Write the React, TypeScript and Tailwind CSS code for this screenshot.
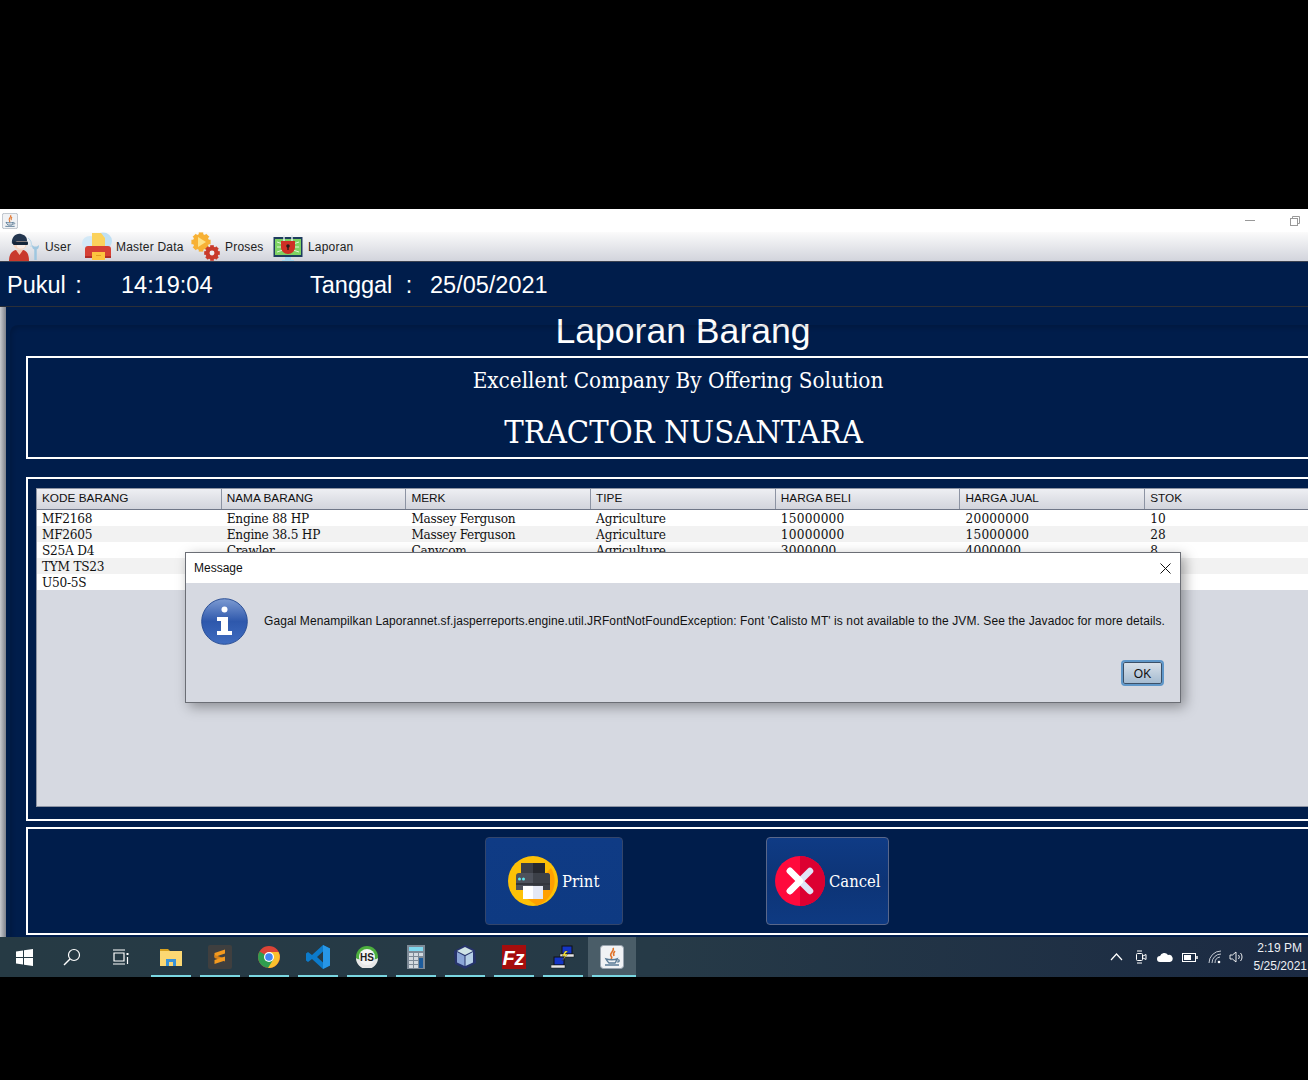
import React from "react";

const sans = "font-['Liberation_Sans',Arial,sans-serif]";
const serif = "font-['DejaVu_Serif_Condensed','DejaVu_Serif',serif]";

const headers = ["KODE BARANG", "NAMA BARANG", "MERK", "TIPE", "HARGA BELI", "HARGA JUAL", "STOK"];
const colTracking = [
  "tracking-[-0.25px]",
  "tracking-[-0.25px]",
  "tracking-[-0.25px]",
  "tracking-[-0.05px]",
  "tracking-[0.25px]",
  "tracking-[0.25px]",
  "tracking-[0.25px]",
];
const rows = [
  ["MF2168", "Engine 88 HP", "Massey Ferguson", "Agriculture", "15000000", "20000000", "10"],
  ["MF2605", "Engine 38.5 HP", "Massey Ferguson", "Agriculture", "10000000", "15000000", "28"],
  ["S25A D4", "Crawler", "Canycom", "Agriculture", "3000000", "4000000", "8"],
  ["TYM TS23", "", "", "", "", "", ""],
  ["U50-5S", "", "", "", "", "", ""],
];

function UserIcon() {
  return (
    <svg width="32" height="28" viewBox="0 0 32 28">
      <path d="M27.500 27v-11" stroke="#9fc7e0" strokeWidth="2.500" fill="none" />
      <path d="M24 12c0 3 1 4.500 3.500 4.500S31 15 31 12l-2 1.500h-3z" fill="#9fc7e0" />
      <path d="M20 5c3 2 4 5 3 9" stroke="#b7d7ea" strokeWidth="1" fill="none" />
      <path d="M1 28c0-8 4-11 8-11h5c4 0 7 3 7 11z" fill="#c9392c" />
      <path d="M8 17h7l-3.500 5z" fill="#f3c8b4" />
      <circle cx="12" cy="10" r="7" fill="#f6d6c3" />
      <path d="M4 11C3 4 8 0 13 1c4 1 6 3 6 7H9z" fill="#23364f" />
      <rect x="5" y="8.500" width="15" height="3.500" rx="1" fill="#16263a" />
      <path d="M9 12h8v2c-2 2-6 2-8 0z" fill="#fbeee7" />
    </svg>
  );
}
function MasterIcon() {
  return (
    <svg width="30" height="30" viewBox="0 0 30 30">
      <ellipse cx="8" cy="11" rx="8" ry="7" fill="#d3e9f7" />
      <ellipse cx="21" cy="9" rx="9" ry="8.500" fill="#bfe0f4" />
      <path d="M10 1h9l4 5v9H10z" fill="#fbd25c" />
      <path d="M6 14h20a3 3 0 0 1 3 3v9H3v-9a3 3 0 0 1 3-3z" fill="#d64035" />
      <rect x="3" y="24" width="26" height="2" fill="#b12d28" />
      <rect x="10" y="20" width="13" height="8" fill="#fcc43f" />
      <rect x="14" y="23" width="5" height="1" fill="#e49c24" />
    </svg>
  );
}
function gear(cx: number, cy: number, r: number, color: string, hole: string) {
  const teeth = [0, 45, 90, 135].map((a) => (
    <rect key={a} x={cx - r * 0.28} y={cy - r * 1.2} width={r * 0.56} height={r * 2.4} fill={color} transform={`rotate(${a} ${cx} ${cy})`} />
  ));
  return (
    <g>
      {teeth}
      <circle cx={cx} cy={cy} r={r} fill={color} />
      <circle cx={cx} cy={cy} r={r * 0.38} fill={hole} />
    </g>
  );
}
function ProsesIcon() {
  return (
    <svg width="32" height="30" viewBox="0 0 32 30">
      {gear(11, 10, 8, "#f7b135", "#f7b135")}
      <path d="M8 5l8 5-8 5z" fill="#fde38a" />
      {gear(22, 21, 6.500, "#c93b2b", "#eef0f3")}
    </svg>
  );
}
function LaporanIcon() {
  return (
    <svg width="31" height="30" viewBox="0 0 31 30">
      <rect x="0.500" y="5" width="29" height="20" fill="#1f3d5e" />
      <rect x="2" y="7" width="26" height="16" fill="#7ed363" />
      <path d="M4 10l6 2M4 15h6M4 20l6-2M26 10l-6 2M26 15h-6M26 20l-6-2" stroke="#dff6d6" strokeWidth="1" />
      <rect x="12" y="25" width="6" height="3" fill="#a6d8f0" />
      <rect x="9" y="28" width="12" height="1" fill="#a6d8f0" />
      <path d="M11 3v6M19 3v6" stroke="#dfe6ea" strokeWidth="1.500" fill="none" />
      <path d="M8 9h14v6c0 4-3 7-7 7s-7-3-7-7z" fill="#cf3025" />
      <circle cx="15" cy="14" r="1.800" fill="#2a1a1a" />
      <rect x="14.300" y="14" width="1.400" height="4" fill="#2a1a1a" />
    </svg>
  );
}
function JavaIcon({ size = 16 }: { size?: number }) {
  return (
    <svg width={size} height={size} viewBox="0 0 24 24">
      <rect x="0.500" y="0.500" width="23" height="23" rx="3" fill="#f0f2f5" stroke="#9aa5b1" />
      <path d="M13 3c2 3-4 5-2 8 1 1 1 2 0 3M15 6c-2 2-2 3-1 5" stroke="#e0732a" strokeWidth="1.600" fill="none" />
      <path d="M6 14c3 1 9 1 11 0-1 2-1 3-2 4H9c-1-1-2-2-3-4zM5 20h14" stroke="#5a7b96" strokeWidth="1.400" fill="none" />
      <path d="M17 15c3-1 3 2 0 2" stroke="#5a7b96" strokeWidth="1.200" fill="none" />
    </svg>
  );
}
function PrintIcon() {
  return (
    <svg width="50" height="50" viewBox="0 0 50 50">
      <circle cx="25" cy="25" r="25" fill="#fdc107" />
      <path d="M15 40L43 12a25 25 0 0 1 0 26 25 25 0 0 1-14 11.500z" fill="#ffa000" />
      <rect x="13" y="7" width="24" height="14" fill="#3c3f47" />
      <rect x="25" y="7" width="12" height="14" fill="#27292f" />
      <path d="M11 17h28a3 3 0 0 1 3 3v14H8V20a3 3 0 0 1 3-3z" fill="#4e525c" />
      <path d="M25 17h14a3 3 0 0 1 3 3v14H25z" fill="#3c4048" />
      <rect x="8" y="27" width="34" height="2" fill="#33363d" />
      <circle cx="11.500" cy="23" r="1.500" fill="#5fe6ee" />
      <circle cx="15.500" cy="23" r="1.500" fill="#5fe6ee" />
      <rect x="15" y="30" width="10" height="13" fill="#ffffff" />
      <rect x="25" y="30" width="10" height="13" fill="#e4e8f5" />
    </svg>
  );
}
function CancelIcon() {
  return (
    <svg width="50" height="50" viewBox="0 0 50 50">
      <circle cx="25" cy="25" r="25" fill="#ff0a3c" />
      <path d="M25 0a25 25 0 0 1 0 50z" fill="#dc0031" />
      <path d="M15 15l20 20M35 15L15 35" stroke="#dfe3f6" strokeWidth="6.500" strokeLinecap="round" />
      <path d="M15 15l10 10M15 35l10-10" stroke="#ffffff" strokeWidth="6.500" strokeLinecap="round" />
    </svg>
  );
}
function InfoIcon() {
  return (
    <svg width="47" height="47" viewBox="0 0 47 47">
      <defs>
        <linearGradient id="ig" x1="0" y1="0" x2="0" y2="1">
          <stop offset="0" stopColor="#7d9bd2" />
          <stop offset="0.5" stopColor="#2e58ac" />
          <stop offset="1" stopColor="#3f6cc0" />
        </linearGradient>
      </defs>
      <circle cx="23.500" cy="23.500" r="22.800" fill="url(#ig)" stroke="#2a4f96" />
      <circle cx="23.500" cy="11.500" r="3" fill="#fff" />
      <path d="M16 19h11v14h4v4H16v-4h4V23h-4z" fill="#fff" />
    </svg>
  );
}

function TaskItem({ children, active }: { children: React.ReactNode; active?: boolean }) {
  return (
    <div className={`relative flex h-10 items-center justify-center ${active ? "w-12 bg-[#4a5d68]" : "w-10"}`}>
      {children}
      <div className={`absolute bottom-0 h-0.5 bg-[#7ad7e2] ${active ? "left-1 right-0" : "left-0 right-0"}`} />
    </div>
  );
}

export default function App() {
  return (
    <div className={`flex h-[1080px] w-[1308px] flex-col overflow-hidden bg-black ${sans}`}>
      <div className="h-[209px] shrink-0" />
      <div className="relative flex h-[728px] shrink-0 flex-col overflow-hidden bg-[#001d4b]">
        {/* title bar */}
        <div className="flex h-[23px] shrink-0 items-center justify-between bg-white pl-[2px] pr-[8px]">
          <JavaIcon />
          <div className="flex items-center gap-[35px]">
            <div className="h-px w-2.5 bg-[#999999]" />
            <svg width="10" height="10" viewBox="0 0 10 10" fill="none" stroke="#999999">
              <rect x="0.500" y="2.500" width="7" height="7" />
              <path d="M2.500 2.500v-2h7v7h-2" />
            </svg>
          </div>
        </div>
        {/* menu bar */}
        <div className="flex h-[30px] shrink-0 items-center border-b border-[#3a4150] bg-gradient-to-b from-[#fbfbfb] to-[#d2d4dc] pl-[8px] text-xs tracking-[0.2px] text-[#222222]">
          <div className="flex w-[76px] items-center"><div className="w-[37px]"><UserIcon /></div><span>User</span></div>
          <div className="flex w-[106px] items-center"><div className="-ml-[2px] w-[34px]"><MasterIcon /></div><span>Master Data</span></div>
          <div className="flex w-[83px] items-center"><div className="w-[35px]"><ProsesIcon /></div><span>Proses</span></div>
          <div className="flex items-center"><div className="w-[35px]"><LaporanIcon /></div><span>Laporan</span></div>
        </div>
        {/* clock */}
        <div className="flex h-[44px] shrink-0 items-center pl-[7px] pt-[4px] text-[23.5px] text-white">
          <span className="w-[114px] [word-spacing:3px]">Pukul :</span>
          <span className="w-[189px]">14:19:04</span>
          <span className="w-[120px] [word-spacing:7px]">Tanggal :</span>
          <span>25/05/2021</span>
        </div>
        <div className="h-px shrink-0 bg-[#2b2f38]" />
        {/* main */}
        <div className="flex min-h-0 flex-1">
          <div className="w-[6px] shrink-0 bg-gradient-to-r from-[#c8cacf] to-[#7f838c]" />
          <div className="min-w-0 flex-1 pl-5">
            <div className="flex h-[49px] w-[1314px] items-center justify-center text-[35.6px] text-white">Laporan Barang</div>
            <div className={`flex h-[103px] w-[1320px] flex-col items-center border-2 border-white pr-[16px] pt-[5px] text-white ${serif}`}>
              <div className="text-[22.300px] leading-[34px]">Excellent Company By Offering Solution</div>
              <div className="ml-[11px] mt-[13px] text-[32.5px] leading-[44px]">TRACTOR NUSANTARA</div>
            </div>
            <div className="mt-[18px] flex h-[344px] w-[1320px] border-2 border-white pl-[8px] pt-[9px] pb-[12px]">
              <div className="flex w-full flex-col border border-[#8c93a3] bg-[#d6d9e1]">
                <div className="flex h-[21px] shrink-0 border-b border-[#6f7687] bg-gradient-to-b from-[#eeeff3] to-[#d2d4dc] text-[11.8px] text-[#111111]">
                  {headers.map((h, i) => (
                    <div key={h} className={`flex w-[184.700px] items-center pl-[5px] ${i < 6 ? "border-r border-[#8c93a3]" : ""}`}>{h}</div>
                  ))}
                </div>
                {rows.map((r, ri) => (
                  <div key={ri} className={`flex h-4 shrink-0 text-[13.5px] leading-4 text-[#111111] ${serif} ${ri % 2 ? "bg-[#f2f2f2]" : "bg-white"}`}>
                    {r.map((c, ci) => (
                      <div key={ci} className={`w-[184.700px] truncate pl-[5px] ${colTracking[ci]}`}>{c}</div>
                    ))}
                  </div>
                ))}
              </div>
            </div>
            <div className={`mt-[6px] flex h-[108px] w-[1320px] items-center border-2 border-white pl-[457px] text-white ${serif}`}>
              <button className="flex h-[88px] w-[138px] items-center rounded border border-[#33456b] bg-gradient-to-b from-[#0f3b85] to-[#0e3a82] pl-[22px] text-[16.5px]">
                <PrintIcon />
                <span className="ml-1 pt-[3px]">Print</span>
              </button>
              <button className="ml-[143px] flex h-[88px] w-[123px] items-center rounded border border-[#59678a] bg-gradient-to-b from-[#0f3b85] via-[#0d3476] to-[#0e3a82] pl-2 text-[16.5px]">
                <CancelIcon />
                <span className="ml-1 pt-[3px]">Cancel</span>
              </button>
            </div>
          </div>
        </div>

        {/* faint inner panel shadow */}
        <div className="pointer-events-none absolute -bottom-5 -right-5 left-[10px] top-[116px] rounded-tl-lg shadow-[inset_2px_3px_4px_rgba(0,0,0,0.14)]" />

        {/* dialog */}
        <div className="absolute left-[185px] top-[343px] flex h-[151px] w-[996px] flex-col border border-[#6b6e75] bg-[#d6d9e1] shadow-[4px_4px_12px_rgba(0,0,0,0.35)]">
          <div className="flex h-[30px] shrink-0 items-center justify-between bg-white pl-2 pr-[9px] text-xs text-[#111111]">
            <span>Message</span>
            <svg width="11" height="11" viewBox="0 0 11 11" stroke="#111111" strokeWidth="1">
              <path d="M0.500 0.500l10 10M10.500 0.500l-10 10" />
            </svg>
          </div>
          <div className="flex h-[76px] items-center pl-[15px]">
            <InfoIcon />
            <span className="ml-[16px] whitespace-nowrap text-xs tracking-[0.085px] text-[#111111]">
              Gagal Menampilkan Laporannet.sf.jasperreports.engine.util.JRFontNotFoundException: Font 'Calisto MT' is not available to the JVM. See the Javadoc for more details.
            </span>
          </div>
          <div className="flex justify-end pr-[16px] pt-px">
            <button className="flex h-[26px] w-[43px] items-center justify-center rounded-[4px] border-2 border-[#5f97c9] bg-gradient-to-b from-[#dbe2ea] to-[#a3bad0] pt-px text-xs text-[#111111] shadow-[inset_0_0_0_1px_#3b5068]">OK</button>
          </div>
        </div>
      </div>

      {/* taskbar */}
      <div className="flex h-10 shrink-0 items-center bg-gradient-to-r from-[#263a44] via-[#263a47] to-[#1b2a43] text-white">
        <div className="flex w-[48px] justify-center">
          <svg width="17" height="17" viewBox="0 0 17 17" fill="#ffffff">
            <path d="M0 2.500l7-1v6.500H0zM8 1.300L17 0v8H8zM0 9h7v6.500l-7-1zM8 9h9v8l-9-1.300z" />
          </svg>
        </div>
        <div className="flex w-[48px] justify-center">
          <svg width="18" height="18" viewBox="0 0 18 18" fill="none" stroke="#ffffff" strokeWidth="1.200">
            <circle cx="11" cy="7" r="5.500" />
            <path d="M7 11l-6 6" strokeWidth="1.500" />
          </svg>
        </div>
        <div className="flex w-[48px] justify-center">
          <svg width="17" height="16" viewBox="0 0 17 16" fill="none" stroke="#ffffff" strokeWidth="1.200">
            <path d="M1 1h12M1 15h12M2 4h10v8H2z" />
            <rect x="14.500" y="4" width="2" height="2" fill="#fff" stroke="none" />
            <path d="M15.500 8v7" />
          </svg>
        </div>
        <div className="ml-[7px] flex gap-[9px]">
          <TaskItem>
            <svg width="22" height="18" viewBox="0 0 22 18">
              <path d="M0 1h8l2 2h-10z" fill="#d9a21f" />
              <rect y="3" width="22" height="15" fill="#fcd873" />
              <path d="M6 18v-7h10v7h-3v-4H9v4z" fill="#3a93d8" />
            </svg>
          </TaskItem>
          <TaskItem>
            <svg width="24" height="24" viewBox="0 0 24 24">
              <rect width="24" height="24" rx="2" fill="#3f3f3f" />
              <path d="M17 4.500L6.500 8v4L17 8.500z" fill="#f49a1f" />
              <path d="M6.500 10l10.500 3.500v3L6.500 13z" fill="#d9821a" />
              <path d="M17 11.500v4L6.500 19v-4z" fill="#f49a1f" />
            </svg>
          </TaskItem>
          <TaskItem>
            <svg width="22" height="22" viewBox="0 0 22 22">
              <circle cx="11" cy="11" r="11" fill="#db4437" />
              <path d="M11 11L1.500 5.500A11 11 0 0 0 11 22l5.500-9.500z" fill="#2f9e4f" />
              <path d="M11 6h9.500A11 11 0 0 1 10 22l5.500-9z" fill="#fbc02d" />
              <circle cx="11" cy="11" r="5" fill="#fff" />
              <circle cx="11" cy="11" r="3.800" fill="#4285f4" />
            </svg>
          </TaskItem>
          <TaskItem>
            <svg width="24" height="24" viewBox="0 0 24 24">
              <path d="M17 0l7 3.500v17L17 24 6 14l-4 3-2-1.500V8.500L2 7l4 3zM17 6.500L11 12l6 5.500z" fill="#0c7bcb" />
              <path d="M17 0l7 3.500v17L17 24z" fill="#2796e6" />
            </svg>
          </TaskItem>
          <TaskItem>
            <svg width="22" height="22" viewBox="0 0 22 22">
              <circle cx="11" cy="11" r="11" fill="#4caf3e" />
              <path d="M0 12a11 11 0 0 0 22 0c-3 3-19 3-22 0z" fill="#e8e8e8" />
              <circle cx="11" cy="11" r="8" fill="#f4f4f4" />
              <text x="11" y="14.500" textAnchor="middle" fontSize="10" fontWeight="700" fill="#1d1d1d" fontFamily="Liberation Sans">HS</text>
            </svg>
          </TaskItem>
          <TaskItem>
            <svg width="18" height="24" viewBox="0 0 18 24">
              <rect width="18" height="24" fill="#7d8a97" />
              <rect x="2" y="2" width="14" height="4" fill="#7fd8ef" />
              <g fill="#d3dae0">
                <rect x="2" y="8" width="4" height="3" /><rect x="7" y="8" width="4" height="3" /><rect x="12" y="8" width="4" height="3" />
                <rect x="2" y="12" width="4" height="3" /><rect x="7" y="12" width="4" height="3" />
                <rect x="2" y="16" width="4" height="3" /><rect x="7" y="16" width="4" height="3" />
                <rect x="2" y="20" width="4" height="3" /><rect x="7" y="20" width="4" height="3" />
              </g>
              <rect x="12" y="13" width="4" height="10" fill="#1d5c9c" />
            </svg>
          </TaskItem>
          <TaskItem>
            <svg width="22" height="24" viewBox="0 0 22 24">
              <path d="M11 0l10 5 1 13-11 6L1 19 0 6z" fill="#26336b" />
              <path d="M11 2l8 4-8 4-8-4z" fill="#cfe3e6" />
              <path d="M3 7l7.500 4v10L3 17.500z" fill="#8ba5d6" />
              <path d="M19 7l-7.500 4v10l7.500-3.500z" fill="#b6cfe6" />
            </svg>
          </TaskItem>
          <TaskItem>
            <svg width="24" height="24" viewBox="0 0 24 24">
              <rect width="24" height="24" fill="#a50d0d" />
              <text x="11.500" y="20" textAnchor="middle" fontSize="20" fontWeight="700" fontStyle="italic" fill="#ffffff" fontFamily="Liberation Sans">Fz</text>
            </svg>
          </TaskItem>
          <TaskItem>
            <svg width="24" height="24" viewBox="0 0 24 24">
              <rect x="11" y="1" width="10" height="8" fill="#1435c4" stroke="#111" />
              <rect x="9" y="9" width="14" height="3" fill="#e5e5e5" stroke="#111" strokeWidth="0.500" />
              <rect x="3" y="12" width="10" height="8" fill="#1435c4" stroke="#111" />
              <rect x="0" y="20" width="14" height="3" fill="#e5e5e5" stroke="#111" strokeWidth="0.500" />
              <path d="M14 6l-3 5h3l-3 5 6-7h-3l3-3z" fill="#f5e23a" stroke="#222" strokeWidth="0.300" />
            </svg>
          </TaskItem>
          <div className="-ml-[4px]">
            <TaskItem active><JavaIcon size={24} /></TaskItem>
          </div>
        </div>
        <div className="ml-auto flex items-center pr-[1px]">
          <svg width="13" height="8" viewBox="0 0 13 8" fill="none" stroke="#ffffff" strokeWidth="1.200"><path d="M1 7l5.500-6L12 7" /></svg>
          <svg className="ml-[12px]" width="12" height="16" viewBox="0 0 12 16" fill="none" stroke="#ffffff"><rect x="1.500" y="4.500" width="6" height="7" rx="1" /><path d="M8 7l3-1.500v5L8 9M2 2h5M2 14h5" /></svg>
          <svg className="ml-[10px]" width="16" height="10" viewBox="0 0 16 10" fill="#ffffff"><path d="M3 10a3 3 0 0 1 0-6 4.500 4.500 0 0 1 8-1 3.500 3.500 0 0 1 2 7z" /></svg>
          <svg className="ml-[9px]" width="16" height="9" viewBox="0 0 16 9" fill="none" stroke="#ffffff"><rect x="0.500" y="0.500" width="13" height="8" /><rect x="2" y="2" width="7" height="5" fill="#ffffff" stroke="none" /><path d="M15 3v3" strokeWidth="1.500" /></svg>
          <svg className="ml-[10px]" width="14" height="14" viewBox="0 0 14 14" fill="none" stroke="#d8dde3" strokeWidth="0.900"><path d="M1 13a12 12 0 0 1 12-12M4 13a9 9 0 0 1 9-9M7 13a6 6 0 0 1 5-6" /><circle cx="11" cy="12" r="1.300" fill="#fff" stroke="none" /></svg>
          <svg className="ml-[7px]" width="15" height="14" viewBox="0 0 15 14" fill="none" stroke="#ffffff" strokeWidth="0.900"><path d="M1 5h2.500L7 2v10L3.500 9H1zM9.500 5a3 3 0 0 1 0 4M11.500 3a6 6 0 0 1 0 8" /></svg>
          <div className="flex w-[63px] flex-col items-end text-xs leading-[18px] text-[#eef1f4]">
            <span className="pr-[5px]">2:19 PM</span>
            <span>5/25/2021</span>
          </div>
        </div>
      </div>
    </div>
  );
}
